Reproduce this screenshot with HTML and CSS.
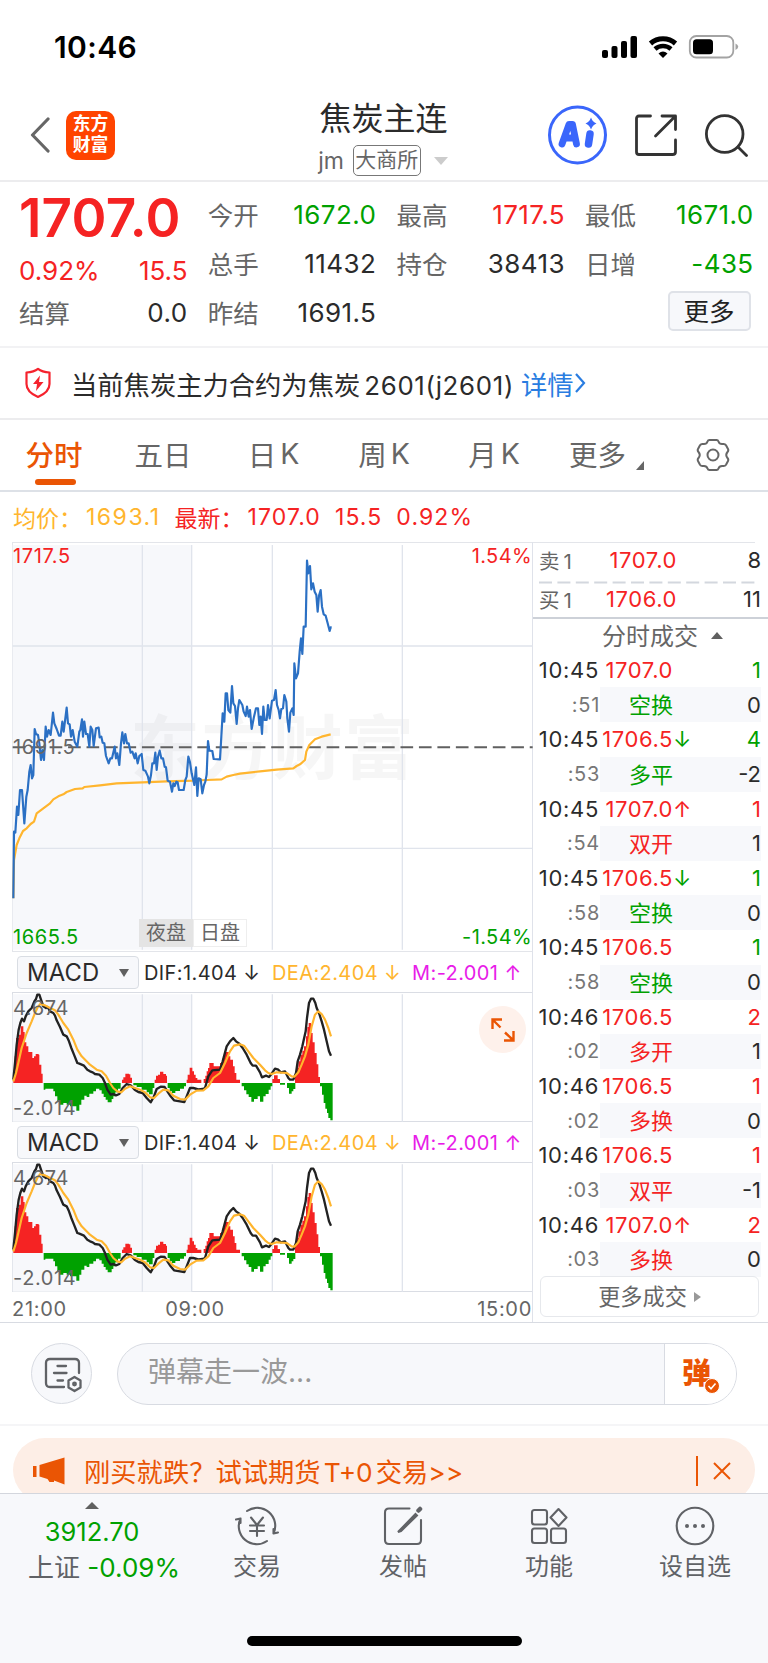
FILE: index.html
```html
<!DOCTYPE html>
<html lang="zh-CN">

<head>
    <meta charset="UTF-8">
    <meta name="viewport" content="width=device-width, initial-scale=1.0">
    <title>焦炭主连</title>
    <link rel="stylesheet" href="styles.css">
</head>

<body>
    <div class="status-bar">
        <span class="clock">10:46</span>
        <svg class="status-icons" width="138" height="24" viewBox="0 0 138 24">
            <rect x="0" y="15" width="6" height="8" rx="2" />
            <rect x="9.5" y="11" width="6" height="12" rx="2" />
            <rect x="19" y="6" width="6" height="17" rx="2" />
            <rect x="28.500" y="1" width="6.500" height="22" rx="2" />
            <path d="M48.500 8.500A19 19 0 0 1 73.500 8.500" fill="none" stroke="#000" stroke-width="5" />
            <path d="M53 14A12 12 0 0 1 69 14" fill="none" stroke="#000" stroke-width="4.500" />
            <path d="M56.500 18.500Q61 14.500 65.500 18.500L61 23Z" />
            <rect x="87.800" y="1" width="43.500" height="21.500" rx="6.500" fill="none" stroke="#a3a3a3" stroke-width="1.800" />
            <rect x="91" y="4.200" width="20" height="15" rx="3.500" />
            <path d="M133.500 8.500Q139 11.700 133.500 15Z" fill="#a3a3a3" />
        </svg>
    </div>

    <header class="header">
        <div class="header-left">
            <svg width="20" height="36" viewBox="0 0 20 36">
                <path d="M18 2L2.500 18L18 34" fill="none" stroke="#666" stroke-width="3.200" stroke-linecap="round" stroke-linejoin="round" />
            </svg>
            <div class="logo">东方<br>财富</div>
        </div>
        <div class="header-title">
            <div class="name">焦炭主连</div>
            <div class="code">jm <span class="exchange">大商所</span><i class="caret-down"></i></div>
        </div>
        <div class="header-right">
            <svg width="59" height="60" viewBox="0 0 59 60">
                <circle cx="29.500" cy="30" r="28" fill="none" stroke="#3a66fb" stroke-width="3" />
                <path d="M14 39L21 19.500H24.500L28.500 39M17.500 33H26" fill="none" stroke="#3a66fb" stroke-width="6.800" stroke-linecap="round" stroke-linejoin="round" />
                <path d="M42 29L40.500 39" fill="none" stroke="#3a66fb" stroke-width="7.500" stroke-linecap="round" />
                <path d="M43 12.500Q44.500 17 48.500 18.500Q44.500 20 43 24.500Q41.500 20 37.500 18.500Q41.500 17 43 12.500Z" fill="#3a66fb" />
            </svg>
            <svg width="42" height="42" viewBox="0 0 42 42" fill="none" stroke="#333" stroke-width="2.800" stroke-linecap="round" stroke-linejoin="round">
                <path d="M15.500 2H4Q1.500 2 1.500 4.500V38Q1.500 40.500 4 40.500H37.500Q40.500 40.500 40.500 38V26M27 2H40.500V15.500M40 2.500L20.500 22" />
            </svg>
            <svg width="43" height="43" viewBox="0 0 43 43" fill="none" stroke="#333" stroke-width="2.800" stroke-linecap="round">
                <circle cx="19.700" cy="20" r="18.300" />
                <path d="M33 33L41.500 41.500" />
            </svg>
        </div>
    </header>

    <section class="quote">
        <div class="quote-main">
            <div class="price red">1707.0</div>
            <div class="change red"><span>0.92%</span><span>15.5</span></div>
        </div>
        <div class="cell"><label>今开</label><span class="green">1672.0</span></div>
        <div class="cell"><label>最高</label><span class="red">1717.5</span></div>
        <div class="cell"><label>最低</label><span class="green">1671.0</span></div>
        <div class="cell"><label>总手</label><span>11432</span></div>
        <div class="cell"><label>持仓</label><span>38413</span></div>
        <div class="cell"><label>日增</label><span class="green">-435</span></div>
        <div class="cell"><label>结算</label><span>0.0</span></div>
        <div class="cell"><label>昨结</label><span>1691.5</span></div>
        <button class="more-button">更多</button>
    </section>

    <section class="notice">
        <svg width="28" height="32" viewBox="0 0 28 32">
            <path d="M14 1.800Q18 5 25.500 5.500V17Q25.500 25 14 30Q2.500 25 2.500 17V5.500Q10 5 14 1.800Z" fill="none" stroke="#f5222d" stroke-width="2.200" stroke-linejoin="round" />
            <path d="M16 8.500L9 17H13L12 24L19.500 15H15Z" fill="#f5222d" />
        </svg>
        <span class="notice-text">当前焦炭主力合约为焦炭<span class="num">2601(j2601)</span></span>
        <a class="detail">详情<svg width="12" height="22" viewBox="0 0 12 22"><path d="M2 2L10 11L2 20" fill="none" stroke="#2a7de1" stroke-width="2.200" /></svg></a>
    </section>

    <nav class="tabs">
        <span class="tab active">分时</span>
        <span class="tab">五日</span>
        <span class="tab">日<b>K</b></span>
        <span class="tab">周<b>K</b></span>
        <span class="tab">月<b>K</b></span>
        <span class="tab tab-more">更多<i class="corner"></i></span>
        <span class="tab">
            <svg width="34" height="34" viewBox="0 0 34 34" fill="none" stroke="#666" stroke-width="2" stroke-linejoin="round">
                <path d="M11.500 3.500Q12 2 13.500 2H20.500Q22 2 22.500 3.500Q23.500 6.500 27 6Q29 5.700 30 7.300L32 11Q32.800 12.500 31.500 14Q29 17 31.500 20Q32.800 21.500 32 23L30 26.700Q29 28.300 27 28Q23.500 27.500 22.500 30.500Q22 32 20.500 32H13.500Q12 32 11.500 30.500Q10.500 27.500 7 28Q5 28.300 4 26.700L2 23Q1.200 21.500 2.500 20Q5 17 2.500 14Q1.200 12.500 2 11L4 7.300Q5 5.700 7 6Q10.500 6.500 11.500 3.500Z" />
                <circle cx="17" cy="17" r="5.500" />
            </svg>
        </span>
    </nav>

    <div class="summary">
        <span class="avg">均价：</span><span class="avg avg-num">1693.1</span>
        <span class="red last">最新：</span><span class="red last-num">1707.0</span><span class="red last-num">15.5</span><span class="red last-num">0.92%</span>
    </div>

    <main class="board">
        <div class="charts">
            <div class="time-chart">
                <!-- drawn at 3 units per pixel -->
                <svg width="521" height="410" viewBox="36 36 1563 1230">
                    <rect x="38" y="45" width="537" height="1214" fill="#f7f8fb" />
                    <text class="watermark" x="390" y="733">东方财富</text>
                    <path class="grid" d="M427 45V1259M575 45V1259M817 45V1259M1207 45V1259M38 348H1598M38 955H1598" />
                    <path d="M38 652H1598" fill="none" stroke="#606060" stroke-width="6" stroke-dasharray="38 17.400" />
                    <path class="line avg-line" d="M40 1105L42 990L50 945L58 925L69 903L80 895L92 882L102 875L110 850L130 835L150 820L160 808L175 799L190 793L200 786L225 777L248 775L253 771L300 766L350 760L427 757L500 754L580 752L622 750L665 748L680 740L700 735L720 731L780 724L830 719L880 715L890 708L900 703L915 690L919 665L928 645L945 628L965 620L992 613" />
                    <path class="line price-line" d="M40 1105L42 905L46 908L51 830L55 855L60 780L66 780L73 880L79 800L83 780L88 725L92 705L96 745L100 735L104 597L108 612L114 615L118 640L123 690L127 660L132 690L137 590L141 620L146 600L152 615L159 548L163 580L170 597L177 617L182 617L187 575L191 605L200 533L204 580L209 583L213 620L218 600L224 635L232 650L238 605L241 600L246 568L249 620L253 575L258 612L263 612L268 650L272 590L277 600L281 648L288 595L296 593L299 622L304 620L308 638L313 640L318 678L326 700L331 685L336 685L344 650L348 685L352 670L358 705L363 640L367 607L372 640L376 612L381 640L386 640L392 668L397 665L404 685L407 670L413 700L418 678L425 672L430 720L436 722L444 740L448 760L453 735L457 700L462 700L466 668L470 720L474 680L479 662L484 685L489 685L494 710L498 712L503 752L510 755L516 785L520 760L524 768L529 755L533 757L537 780L551 780L556 750L560 740L565 680L570 697L575 730L583 765L588 712L592 798L596 745L602 748L607 790L612 765L616 755L620 733L624 633L628 662L637 663L641 687L660 688L664 620L668 550L673 575L677 490L681 490L685 540L691 548L696 468L700 520L705 528L710 582L714 535L718 510L727 525L731 545L737 558L741 530L746 560L750 540L755 597L762 560L768 535L774 535L778 585L782 560L786 612L790 530L794 570L800 570L804 525L809 565L816 512L822 510L827 480L831 525L836 540L840 565L844 537L849 535L853 495L859 515L862 565L867 605L871 548L877 535L881 555L883 400L888 445L894 430L899 365L903 325L907 372L911 290L917 290L921 92L925 130L930 108L934 178L939 160L944 185L949 195L953 245L957 197L962 180L966 230L971 253L977 257L983 280L989 303L992 292L995 292" />
                </svg>
                <span class="scale top-left red">1717.5</span>
                <span class="scale top-right red">1.54%</span>
                <span class="scale middle">1691.5</span>
                <span class="scale bottom-left green">1665.5</span>
                <span class="scale bottom-right green">-1.54%</span>
                <div class="session"><span class="night">夜盘</span><span class="day">日盘</span></div>
            </div>

            <div class="indicator">
                <div class="indicator-bar">
                    <div class="select">MACD<i></i></div>
                    <span class="dif">DIF:1.404 ↓</span>
                    <span class="dea">DEA:2.404 ↓</span>
                    <span class="m">M:-2.001 ↑</span>
                </div>
                <div class="macd">
                    <svg width="521" height="130" viewBox="36 157 1563 390">
                        <defs>
                            <g id="macd-plot">
                                <rect x="38" y="164" width="537" height="382" fill="#f7f8fb" />
                                <path class="grid" d="M427 164V546M575 164V546M817 164V546M1207 164V546" />
                                <path fill="#f52323" d="M40 430V405H44V350H48V295H57V285H62V260H70V277H74V308H79V320H85V337H97V355H102V350H107V343H116V345H118V375H124V402H128V430ZM366 430V420H370V413H376V402H387V404H391V414H396V430ZM464 430V420H468V408H474V405H480V396H490V403H498V408H501V430ZM560 430V420H563V405H569V384H577V395H582V405H587V415H592V420H604V430ZM611 430V418H616V408H620V395H624V385H628V370H641V380H660V370H668V355H675V337H687V350H691V360H699V380H704V400H709V420H720V430ZM817 430V418H822V407H833V418H840V430ZM885 430V400H890V385H895V365H901V345H907V333H912V320H918V290H922V262H926V250H933V280H938V308H944V340H950V374H955V412H960V430Z" />
                                <path fill="#00a100" d="M131 430V450H136V447H160V455H165V470H172V485H177V495H190V490H200V495H210V500H229V513H238V495H244V480H253V468H260V472H268V462H280V455H288V447H298V452H305V462H311V472H317V480H323V488H335V478H340V470H346V458H354V447H362V430ZM400 430V437H410V442H425V450H440V458H447V464H458V445H463V430ZM503 430V445H509V455H516V460H526V454H540V447H552V440H558V430ZM725 430V440H732V452H739V464H746V472H754V486H762V478H773V470H780V486H790V470H797V463H806V450H812V440H817V430ZM840 430V435H855V430ZM861 430V445H867V462H875V455H880V448H886V430ZM960 430V440H966V465H971V490H976V507H981V520H985V535H991V542H998V430Z" />
                                <path class="line macd-dif" d="M40 420L45 370L50 315L56 270L61 250L66 237L72 245L77 230L85 215L95 205L103 185L108 178L112 165L118 165L123 180L130 200L138 205L143 202L150 215L160 220L165 228L170 242L180 262L190 285L200 290L207 305L214 325L222 345L232 370L238 372L245 375L252 378L262 390L270 395L278 398L285 403L298 405L308 415L315 430L322 450L332 465L340 463L348 467L358 463L368 445L380 433L392 437L404 450L415 457L428 460L440 475L452 488L462 470L470 448L482 441L494 442L502 455L512 470L522 482L540 485L553 487L560 470L570 445L580 445L595 449L608 448L615 445L625 410L637 392L660 390L668 365L680 320L690 305L700 295L708 305L718 312L728 325L740 345L752 370L758 378L768 378L780 398L786 413L798 408L807 412L815 402L825 387L835 390L842 398L855 395L865 415L870 420L880 420L888 400L893 365L900 345L907 320L917 275L921 235L927 190L933 177L940 177L946 190L950 205L957 220L965 245L972 270L980 305L987 335L993 348" />
                                <path class="line avg-line" d="M40 425L48 400L55 370L65 325L80 280L95 245L105 220L112 205L120 193L135 197L150 205L165 212L175 225L190 250L205 270L220 300L232 330L245 350L270 375L290 390L305 395L318 408L330 430L340 445L352 455L364 458L375 447L390 440L405 445L420 450L435 458L450 473L462 475L475 462L490 450L505 452L520 468L540 478L555 480L570 465L590 453L610 452L625 440L640 415L660 400L675 370L690 335L702 318L720 314L732 318L745 335L760 355L780 375L795 392L805 400L815 403L830 398L860 400L875 410L883 411L895 398L905 375L915 350L925 315L935 260L945 225L955 215L965 223L975 240L985 265L993 290" />
                            </g>
                        </defs>
                        <use href="#macd-plot" />
                    </svg>
                    <span class="scale macd-top">4.674</span>
                    <span class="scale macd-bottom">-2.014</span>
                    <span class="expand">
                        <svg width="24" height="24" viewBox="0 0 24 24" fill="none" stroke="#ea5504" stroke-width="2.400">
                            <path d="M11 1.500H1.500V11M2 2L9.500 9.500M13 22.500H22.500V13M22 22L14 14.500" />
                        </svg>
                    </span>
                </div>
            </div>

            <div class="indicator">
                <div class="indicator-bar">
                    <div class="select">MACD<i></i></div>
                    <span class="dif">DIF:1.404 ↓</span>
                    <span class="dea">DEA:2.404 ↓</span>
                    <span class="m">M:-2.001 ↑</span>
                </div>
                <div class="macd">
                    <svg width="521" height="130" viewBox="36 157 1563 390">
                        <use href="#macd-plot" />
                    </svg>
                    <span class="scale macd-top">4.674</span>
                    <span class="scale macd-bottom">-2.014</span>
                </div>
            </div>

            <div class="time-axis"><span>21:00</span><span class="axis-mid">09:00</span><span>15:00</span></div>
        </div>

        <aside class="deals">
            <div class="level"><label>卖<b>1</b></label><span class="red">1707.0</span><em>8</em></div>
            <svg class="dash" width="217" height="3"><path d="M0 1.500H217" stroke="#d3d7de" stroke-width="2" stroke-dasharray="13 5.400" /></svg>
            <div class="level buy"><label>买<b>1</b></label><span class="red">1706.0</span><em>11</em></div>
            <div class="deals-title">分时成交<i class="caret-up"></i></div>
            <ul class="deal-list">
                <li><time>10:45</time><span class="red">1707.0</span><i></i><em class="green">1</em></li>
                <li class="sub"><time>:51</time><p><span class="green">空换</span><em>0</em></p></li>
                <li><time>10:45</time><span class="red">1706.5</span><i class="green">↓</i><em class="green">4</em></li>
                <li class="sub"><time>:53</time><p><span class="green">多平</span><em>-2</em></p></li>
                <li><time>10:45</time><span class="red">1707.0</span><i class="red">↑</i><em class="red">1</em></li>
                <li class="sub"><time>:54</time><p><span class="red">双开</span><em>1</em></p></li>
                <li><time>10:45</time><span class="red">1706.5</span><i class="green">↓</i><em class="green">1</em></li>
                <li class="sub"><time>:58</time><p><span class="green">空换</span><em>0</em></p></li>
                <li><time>10:45</time><span class="red">1706.5</span><i></i><em class="green">1</em></li>
                <li class="sub"><time>:58</time><p><span class="green">空换</span><em>0</em></p></li>
                <li><time>10:46</time><span class="red">1706.5</span><i></i><em class="red">2</em></li>
                <li class="sub"><time>:02</time><p><span class="red">多开</span><em>1</em></p></li>
                <li><time>10:46</time><span class="red">1706.5</span><i></i><em class="red">1</em></li>
                <li class="sub"><time>:02</time><p><span class="red">多换</span><em>0</em></p></li>
                <li><time>10:46</time><span class="red">1706.5</span><i></i><em class="red">1</em></li>
                <li class="sub"><time>:03</time><p><span class="red">双平</span><em>-1</em></p></li>
                <li><time>10:46</time><span class="red">1707.0</span><i class="red">↑</i><em class="red">2</em></li>
                <li class="sub"><time>:03</time><p><span class="red">多换</span><em>0</em></p></li>
            </ul>
            <button class="more-deals">更多成交<i></i></button>
        </aside>
    </main>

    <section class="barrage">
        <span class="barrage-setting">
            <svg width="38" height="36" viewBox="0 0 38 36" fill="none" stroke="#606266" stroke-width="2.300" stroke-linecap="round">
                <path d="M35 16V6Q35 2 31 2H6Q2 2 2 6V26Q2 30 6 30H20" />
                <path d="M13.500 9H22M10 16H22.500M13.500 23.500H19" />
                <path d="M30.500 20L36.500 23.500V30.500L30.500 34L24.500 30.500V23.500Z" stroke-linejoin="round" />
                <circle cx="30.500" cy="27" r="1.300" />
            </svg>
        </span>
        <div class="barrage-input">
            <span class="placeholder">弹幕走一波...</span>
            <span class="barrage-switch">弹
                <svg width="16" height="16" viewBox="0 0 16 16"><circle cx="8" cy="8" r="7.500" fill="#ea5504" stroke="#fff" /><path d="M4.500 8L7 10.700L11.500 5.500" fill="none" stroke="#fff" stroke-width="1.600" /></svg>
            </span>
        </div>
    </section>

    <section class="promo">
        <svg width="32" height="28" viewBox="0 0 32 28" fill="#ea5504">
            <rect x="0" y="9" width="3.500" height="11" />
            <path d="M6.500 8L31.500 0.500V27.500L21 23.500V25H16.500L14.500 22L6.500 19.500Z" />
        </svg>
        <span class="promo-text">刚买就跌？试试期货<span class="num">T+0</span>交易&gt;&gt;</span>
        <i class="promo-divider"></i>
        <svg width="18" height="18" viewBox="0 0 18 18"><path d="M1 1L17 17M17 1L1 17" stroke="#ea5504" stroke-width="2" /></svg>
    </section>

    <footer class="bottom-bar">
        <div class="index">
            <i class="caret-up"></i>
            <div class="green index-value">3912.70</div>
            <div class="index-change">上证 <span class="green">-0.09%</span></div>
        </div>
        <div class="menu">
            <svg width="46" height="40" viewBox="0 0 46 40" fill="none" stroke="#606266" stroke-width="2.100" stroke-linecap="round" stroke-linejoin="round">
                <path d="M13 5A18 18 0 0 1 39.500 27.500L44 26.500M33 35A18 18 0 0 1 6.500 12.500L2 13.500M39.500 27.500V23M6.500 12.500V17" />
                <path d="M17 11.500L23 19L29 11.500M16 19.500H30M16 25H30M23 19.500V30" />
            </svg>
            <span>交易</span>
        </div>
        <div class="menu">
            <svg width="40" height="40" viewBox="0 0 40 40" fill="none" stroke="#606266" stroke-width="2.100" stroke-linecap="round">
                <path d="M26.500 2.500H6Q2 2.500 2 6.500V34Q2 38 6 38H34Q38 38 38 34V14" />
                <path d="M15 26L32.500 8L34 9.500L18 25Z" fill="#606266" stroke-width="2" />
                <path d="M35.500 4.500L37 3" stroke-width="4.500" />
            </svg>
            <span>发帖</span>
        </div>
        <div class="menu">
            <svg width="40" height="40" viewBox="0 0 40 40" fill="none" stroke="#606266" stroke-width="2.100" stroke-linejoin="round">
                <rect x="3" y="4" width="15" height="14.500" rx="2.500" />
                <rect x="3" y="22.500" width="15" height="14.500" rx="2.500" />
                <rect x="22" y="22.500" width="15" height="14.500" rx="2.500" />
                <path d="M29.500 3L37.500 11.500L29.500 20L21.500 11.500Z" />
            </svg>
            <span>功能</span>
        </div>
        <div class="menu">
            <svg width="40" height="40" viewBox="0 0 40 40" fill="#606266">
                <circle cx="20" cy="20" r="18.300" fill="none" stroke="#606266" stroke-width="2.100" />
                <circle cx="12" cy="20" r="2" />
                <circle cx="20" cy="20" r="2" />
                <circle cx="28" cy="20" r="2" />
            </svg>
            <span>设自选</span>
        </div>
        <div class="home-indicator"></div>
    </footer>
</body>

</html>
```

FILE: styles.css
```css
* {
    box-sizing: border-box;
}

body {
    margin: 0;
    width: 768px;
    height: 1663px;
    overflow: hidden;
    background-color: #fff;
    color: #2b2b2b;
    font-family: Inter, "Noto Sans CJK SC", sans-serif;
    font-size: 22px;
    display: flex;
    flex-direction: column;
}

i,
em {
    font-style: normal;
}

b {
    font-weight: normal;
}

svg {
    display: block;
    flex: none;
}

button {
    font-family: inherit;
    padding: 0;
}

/* status bar */
.status-bar {
    height: 90px;
    flex: none;
    display: flex;
    justify-content: space-between;
    align-items: center;
    padding: 4px 28px 0 54px;
    color: #000;
}

.clock {
    font-size: 30px;
    font-weight: 600;
    letter-spacing: 0.4px;
}

/* header */
.header {
    height: 92px;
    flex: none;
    display: grid;
    grid-template-columns: 1fr auto 1fr;
    align-items: center;
    padding: 0 20px 0 30px;
    border-bottom: 2px solid #ececee;
}

.header-left,
.header-right {
    display: flex;
    align-items: center;
}

.header-left {
    gap: 16px;
}

.header-right {
    gap: 28px;
    justify-content: flex-end;
}

.logo {
    width: 49px;
    height: 49px;
    border-radius: 10px;
    background-color: #ff4400;
    color: #fff;
    font-size: 17.8px;
    font-weight: 700;
    line-height: 21px;
    text-align: center;
    padding-top: 2px;
}

.header-title {
    margin-right: 11px;
    text-align: center;
}

.name {
    margin-top: 2px;
    font-size: 32px;
    line-height: 46px;
}

.code {
    display: flex;
    align-items: center;
    height: 32px;
    margin: 3px 0 0 -1px;
    color: #666;
    font-size: 23px;
}

.exchange {
    margin-left: 9px;
    width: 68px;
    height: 31px;
    border: 1.5px solid #777;
    border-radius: 5px;
    font-size: 21px;
    line-height: 28px;
}

.caret-down {
    margin-left: 13px;
    border: 7px solid transparent;
    border-top: 8px solid #ccc;
    border-bottom: 0;
}

.caret-up {
    border: 6px solid transparent;
    border-bottom: 7px solid #606060;
    border-top: 0;
}

/* quote */
.quote {
    height: 166px;
    flex: none;
    display: grid;
    grid-template-columns: repeat(4, 168.500px);
    grid-template-rows: repeat(3, 49px);
    column-gap: 20.2px;
    padding: 8px 0 0 19px;
    border-bottom: 2px solid #f2f2f4;
}

.quote-main {
    grid-row: 1 / span 2;
}

.price {
    height: 56px;
    line-height: 57px;
    font-size: 53px;
    font-weight: 600;
    letter-spacing: 0.2px;
}

.change {
    display: flex;
    justify-content: space-between;
    margin-top: 8px;
    line-height: 34px;
    font-size: 26px;
}

.cell {
    display: flex;
    justify-content: space-between;
    align-items: center;
    font-size: 26px;
    letter-spacing: 0.4px;
}

.cell label {
    padding-bottom: 3px;
    color: #666;
    font-size: 25.5px;
    letter-spacing: 0;
}

.more-button {
    grid-column: 4;
    justify-self: end;
    align-self: center;
    margin: 0 3px 3px 0;
    width: 83px;
    height: 40px;
    border: 2px solid #dfe2e8;
    border-radius: 5px;
    background-color: #f7f8fb;
    color: #222;
    font-size: 25.5px;
    line-height: 35px;
}

/* notice */
.notice {
    height: 72px;
    flex: none;
    display: flex;
    align-items: center;
    padding-left: 24px;
    border-bottom: 2px solid #ececee;
    font-size: 26.3px;
}

.notice-text {
    margin-left: 19px;
}

.notice .num {
    margin-left: 4px;
    font-size: 25.8px;
    letter-spacing: 0.7px;
}

.detail {
    display: flex;
    align-items: center;
    margin-left: 7px;
    color: #2a7de1;
}

/* tabs */
.tabs {
    height: 72px;
    flex: none;
    display: grid;
    grid-template-columns: 108px 110px 111px 110px 110px 115px 98px;
    border-bottom: 2px solid #dde1e7;
    color: #666;
    font-size: 28.5px;
}

.tab {
    display: flex;
    justify-content: center;
    align-items: center;
    position: relative;
    padding-bottom: 3px;
}

.tab:last-child {
    padding-bottom: 0;
}

.tab b {
    margin-left: 4px;
}

.active {
    color: #ea5504;
    font-weight: 500;
}

.active::after {
    content: "";
    position: absolute;
    left: 35px;
    bottom: 5px;
    width: 41px;
    height: 6px;
    border-radius: 3px;
    background-color: #ea5504;
}

.corner {
    margin: 24px 0 0 10px;
    border-left: 8px solid transparent;
    border-bottom: 9px solid #666;
}

/* average and last price */
.summary {
    height: 50px;
    flex: none;
    display: flex;
    align-items: center;
    padding-left: 13px;
    font-size: 23px;
}

.avg {
    color: #ffb52e;
}

.avg-num {
    margin: 0 14px 0 4px;
    letter-spacing: 1.5px;
}

.last {
    margin-right: 4px;
}

.last-num {
    margin-right: 14px;
    letter-spacing: 1.1px;
}

/* charts */
.board {
    height: 781px;
    flex: none;
    display: flex;
    border-bottom: 1px solid #d8dbe2;
}

.charts {
    width: 533px;
    padding-left: 12px;
    border-right: 1px solid #dfe2ea;
}

.time-chart {
    height: 410px;
    position: relative;
    border: 1px solid #e3e5ea;
    border-right: 0;
}

.time-chart svg {
    margin: -1px;
}

.grid {
    fill: none;
    stroke: #e0e4ec;
    stroke-width: 4;
}

.watermark {
    font-size: 210px;
    font-weight: 700;
    letter-spacing: 4px;
    fill: #000;
    fill-opacity: 0.035;
}

.line {
    fill: none;
    stroke-linejoin: round;
}

.price-line {
    stroke: #2b70c4;
    stroke-width: 6.5;
}

.avg-line {
    stroke: #ffb52e;
    stroke-width: 6.5;
}

.macd-dif {
    stroke: #222;
    stroke-width: 7;
}

.scale {
    position: absolute;
    left: 0;
    color: #666;
    font-size: 20px;
    line-height: 24px;
    letter-spacing: 0.6px;
}

.top-left {
    top: 1px;
}

.top-right {
    top: 1px;
    left: auto;
    right: 0;
    letter-spacing: 0.4px;
}

.middle {
    top: 192px;
}

.bottom-left {
    bottom: 2px;
}

.bottom-right {
    bottom: 2px;
    left: auto;
    right: 0;
    letter-spacing: 0.4px;
}

.session {
    position: absolute;
    left: 126px;
    bottom: 4px;
    display: flex;
    color: #666;
    font-size: 20px;
    line-height: 26px;
    text-align: center;
}

.night {
    width: 54px;
    background-color: #e4e4e4;
    border: 1px solid #e4e4e4;
}

.day {
    width: 54px;
    background-color: #fff;
    border: 1px solid #eee;
}

.indicator-bar {
    height: 40px;
    display: flex;
    align-items: center;
    padding: 1px 0 0 5px;
    font-size: 20px;
    letter-spacing: 0.4px;
}

.select {
    width: 122px;
    height: 33px;
    display: flex;
    align-items: center;
    justify-content: space-between;
    padding: 0 9px;
    border: 1.5px solid #d9dde3;
    border-radius: 4px;
    background-color: #f7f8fb;
    font-size: 23.8px;
    letter-spacing: 0.2px;
}

.select i {
    border: 5px solid transparent;
    border-top: 8px solid #606060;
    border-bottom: 0;
}

.dif {
    width: 128px;
    padding-left: 5px;
}

.dea {
    width: 140px;
    padding-left: 5px;
    color: #ffb52e;
}

.m {
    padding-left: 5px;
    color: #e81ce8;
}

.macd {
    height: 130px;
    position: relative;
    border: 1px solid #dadde4;
    border-right: 0;
}

.macd svg {
    margin: -1px;
}

.macd-top {
    top: 3px;
}

.macd-bottom {
    bottom: 1px;
}

.expand {
    position: absolute;
    left: 466px;
    top: 13px;
    width: 47px;
    height: 47px;
    border-radius: 50%;
    background-color: #fef1eb;
    display: flex;
    justify-content: center;
    align-items: center;
}

.macd .expand svg {
    margin: 0;
}

.time-axis {
    display: flex;
    justify-content: space-between;
    padding-top: 5px;
    color: #666;
    font-size: 20px;
    line-height: 24px;
    letter-spacing: 0.7px;
}

.axis-mid {
    margin-right: 154px;
}

/* deals */
.deals {
    width: 235px;
    display: flex;
    flex-direction: column;
}

.level {
    height: 39px;
    display: flex;
    align-items: center;
    padding: 0 7px 3px 6px;
    width: 235px;
    background: linear-gradient(#e3e5ea, #e3e5ea) no-repeat 0 0 / 222px 1px;
}

.level label {
    width: 37px;
    padding-bottom: 1px;
    color: #666;
    font-size: 20.5px;
}

.level b {
    margin-left: 4px;
}

.level span {
    width: 101px;
    letter-spacing: 0.6px;
    text-align: right;
}

.level em,
.deal-list em {
    margin-left: auto;
}

.level.buy {
    height: 33px;
    background: none;
}

.dash {
    margin-left: 6px;
}

.deals-title {
    height: 36px;
    display: flex;
    align-items: center;
    justify-content: center;
    padding: 0 0 4px 24px;
    border-top: 2px solid #cdd1d8;
    color: #666;
    font-size: 24px;
}

.deals-title .caret-up {
    margin: 3px 0 0 13px;
}

.deal-list {
    list-style: none;
    margin: 0;
    padding: 0 7px 0 5px;
    height: 624px;
    display: grid;
    grid-template-rows: repeat(18, 1fr);
}

.deal-list li {
    display: flex;
    align-items: center;
}

.deal-list time {
    width: 61px;
    letter-spacing: 0.7px;
    text-align: right;
    white-space: nowrap;
}

.deal-list .sub time {
    width: 62px;
    color: #777;
    font-size: 20px;
}

.deal-list li > span {
    width: 74px;
    letter-spacing: 0.6px;
    text-align: right;
}

.deal-list p {
    flex: 1;
    height: 100%;
    margin: 0;
    display: flex;
    align-items: center;
    background-color: #f7f8fb;
}

.deal-list p span {
    margin-left: 29px;
    padding-bottom: 3px;
}

.more-deals {
    margin: -1px 0 0 7px;
    width: 219px;
    height: 41px;
    display: flex;
    align-items: center;
    justify-content: center;
    padding-bottom: 3px;
    border: 1.5px solid #e6e8ec;
    border-radius: 6px;
    background-color: #fff;
    color: #666;
    font-size: 22.2px;
}

.more-deals i {
    margin: 3px 0 0 7px;
    border: 5px solid transparent;
    border-left: 7px solid #999;
    border-right: 0;
}

/* barrage input */
.barrage {
    height: 103px;
    flex: none;
    display: flex;
    align-items: center;
    padding-left: 31px;
    border-bottom: 2px solid #f5f5f7;
}

.barrage-setting {
    width: 61px;
    height: 61px;
    display: flex;
    align-items: center;
    justify-content: center;
    padding: 3px 0 0 2px;
    border: 1px solid #d8dbe2;
    border-radius: 50%;
    background-color: #f7f8fb;
}

.barrage-input {
    width: 620px;
    height: 62px;
    margin-left: 25px;
    display: flex;
    overflow: hidden;
    border: 1px solid #d8dbe2;
    border-radius: 31px;
    background-color: #f7f8fb;
}

.placeholder {
    width: 546px;
    padding-left: 30px;
    color: #999;
    font-size: 28px;
    line-height: 56px;
}

.barrage-switch {
    flex: 1;
    position: relative;
    padding-left: 17px;
    border-left: 1px solid #d8dbe2;
    background-color: #fff;
    color: #ea5504;
    font-size: 29px;
    font-weight: 900;
    line-height: 60px;
}

.barrage-switch svg {
    position: absolute;
    left: 39px;
    top: 34px;
}

/* promo banner */
.promo {
    height: 64px;
    flex: none;
    display: flex;
    align-items: center;
    margin: 12px 13px 0;
    padding: 2px 24px 0 20px;
    border-radius: 32px;
    background-color: #fdeee6;
    color: #ea5504;
    font-size: 26.3px;
}

.promo-text {
    margin-left: 19px;
    padding-bottom: 2px;
}

.promo .num {
    margin: 0 3px;
}

.promo-divider {
    margin: 0 15px 0 auto;
    width: 2px;
    height: 30px;
    background-color: #ea5504;
}

/* bottom bar */
.bottom-bar {
    height: 171px;
    flex: none;
    margin-top: -9px;
    display: flex;
    flex-wrap: wrap;
    align-content: flex-start;
    position: relative;
    border-top: 1px solid #d3d6dd;
    background-color: #f7f8fb;
    color: #606266;
}

.index {
    width: 184px;
    display: flex;
    flex-direction: column;
    align-items: center;
    padding: 8px 0 0 24px;
}

.index .caret-up {
    margin-right: 24px;
    border-left-width: 7px;
    border-right-width: 7px;
}

.index-value {
    margin: 6px 24px 0 0;
    font-size: 25.5px;
    line-height: 34px;
}

.index-change {
    font-size: 26px;
    line-height: 38px;
    white-space: nowrap;
}

.menu {
    width: 146px;
    height: 143px;
    display: flex;
    flex-direction: column;
    align-items: center;
    padding-top: 12px;
    font-size: 24px;
}

.menu span {
    margin-top: 3px;
    line-height: 36px;
}

.home-indicator {
    width: 275px;
    height: 10px;
    margin: -1px auto 0;
    border-radius: 5px;
    background-color: #000;
}

/* rise and fall colours */
.red {
    color: #f52323;
}

.green {
    color: #00a100;
}
```
